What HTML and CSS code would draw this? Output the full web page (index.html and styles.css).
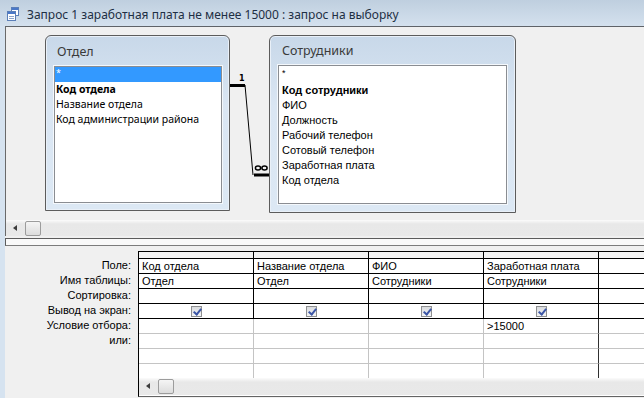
FILE: index.html
```html
<!DOCTYPE html>
<html lang="ru">

<head>
  <meta charset="UTF-8" />
  <title>Запрос 1 заработная плата не менее 15000</title>
  <link rel="stylesheet" href="styles.css">
</head>

<body>
  <div class="titlebar">
    <svg class="app-icon" width="12" height="14" viewBox="0 0 12 14">
      <rect x="4.5" y="0.5" width="7" height="8" fill="#fff" stroke="#5b7fb8" />
      <rect x="5" y="1" width="6" height="2" fill="#4a78c8" />
      <rect x="0.5" y="4.5" width="8" height="9" fill="#fff" stroke="#5b7fb8" />
      <rect x="1" y="5" width="7" height="2" fill="#4a78c8" />
      <path d="M2 9.5h5M2 11.5h5" stroke="#8aa4cc" />
    </svg>
    <span class="title">Запрос 1 заработная плата не менее 15000 : запрос на выборку</span>
  </div>

  <div class="frame">
    <div class="top-pane">
      <div class="diagram">
        <div class="tbl tbl-otdel">
          <div class="tbl-title">Отдел</div>
          <div class="tbl-list">
            <div class="fld selected">*</div>
            <div class="fld key">Код отдела</div>
            <div class="fld">Название отдела</div>
            <div class="fld">Код администрации района</div>
          </div>
        </div>

        <div class="tbl tbl-staff">
          <div class="tbl-title">Сотрудники</div>
          <div class="tbl-list">
            <div class="fld star">*</div>
            <div class="fld key">Код сотрудники</div>
            <div class="fld">ФИО</div>
            <div class="fld">Должность</div>
            <div class="fld">Рабочий телефон</div>
            <div class="fld">Сотовый телефон</div>
            <div class="fld">Заработная плата</div>
            <div class="fld">Код отдела</div>
          </div>
        </div>

        <!-- one-to-many link between the two tables -->
        <svg class="link" width="300" height="190">
          <path d="M224 58.5h15" stroke="#000" stroke-width="3" />
          <path d="M239 58L247 148" stroke="#000" stroke-width="1" />
          <path d="M248 148h15" stroke="#000" stroke-width="3" />
          <text x="233" y="54" class="link-one">1</text>
          <ellipse cx="252" cy="141" rx="2.6" ry="2" fill="none" stroke="#000" stroke-width="1.5" />
          <ellipse cx="258.5" cy="141" rx="2.6" ry="2" fill="none" stroke="#000" stroke-width="1.5" />
        </svg>
      </div>

      <div class="hscroll">
        <span class="arrow"></span>
        <span class="thumb"></span>
      </div>
    </div>

    <div class="splitter"></div>

    <div class="bottom-pane">
      <div class="labels">
        <div>Поле:</div>
        <div>Имя таблицы:</div>
        <div>Сортировка:</div>
        <div>Вывод на экран:</div>
        <div>Условие отбора:</div>
        <div>или:</div>
      </div>

      <div class="grid-wrap">
        <div class="qgrid">
          <div class="c sel"></div><div class="c sel"></div><div class="c sel"></div><div class="c sel"></div><div class="c sel last"></div>

          <div class="c">Код отдела</div><div class="c">Название отдела</div><div class="c">ФИО</div><div class="c">Заработная плата</div><div class="c last"></div>

          <div class="c">Отдел</div><div class="c">Отдел</div><div class="c">Сотрудники</div><div class="c">Сотрудники</div><div class="c last"></div>

          <div class="c"></div><div class="c"></div><div class="c"></div><div class="c"></div><div class="c last"></div>

          <div class="c chk-cell"><span class="chk"></span></div>
          <div class="c chk-cell"><span class="chk"></span></div>
          <div class="c chk-cell"><span class="chk"></span></div>
          <div class="c chk-cell"><span class="chk"></span></div>
          <div class="c last"></div>

          <div class="c lo"></div><div class="c lo"></div><div class="c lo"></div><div class="c lo edge">&gt;15000</div><div class="c lo last"></div>
          <div class="c lo"></div><div class="c lo"></div><div class="c lo"></div><div class="c lo edge"></div><div class="c lo last"></div>
          <div class="c lo"></div><div class="c lo"></div><div class="c lo"></div><div class="c lo edge"></div><div class="c lo last"></div>
          <div class="c lo end"></div><div class="c lo end"></div><div class="c lo end"></div><div class="c lo end edge"></div><div class="c lo end last"></div>
        </div>

        <div class="hscroll grid-scroll">
          <span class="arrow"></span>
          <span class="thumb"></span>
        </div>
      </div>
    </div>
  </div>
</body>

</html>
```

FILE: styles.css
```css
* {
  box-sizing: border-box;
}

body {
  margin: 0;
  width: 644px;
  height: 398px;
  overflow: hidden;
  background: #d6e3f0;
  font-family: 'Liberation Sans', Arial, sans-serif;
  font-size: 11px;
  color: #000;
}

/* title bar */

.titlebar {
  height: 26px;
  display: flex;
  align-items: center;
  gap: 8px;
  padding-left: 7px;
  background: linear-gradient(to bottom, #bfcfdf, #d4e1ee);
}

.app-icon {
  margin-top: 1px;
}

.title {
  font-family: 'Noto Sans', sans-serif;
  font-size: 12px;
  color: #1e2f44;
  margin-top: 2px;
}

.frame {
  margin-left: 5px;
  background: #f0f0f0;
  height: 372px;
}

/* upper pane: table diagram */

.top-pane {
  border-left: 1px solid #6a6a6a;
  border-top: 1px solid #5f6368;
}

.diagram {
  position: relative;
  height: 193px;
}

.tbl {
  position: absolute;
  top: 8px;
  display: flex;
  flex-direction: column;
  padding: 0 7px 7px 8px;
  border: 1px solid #5c5c5c;
  border-radius: 6px 6px 0 0;
  background: linear-gradient(to bottom, #c8d8e9, #dae6f3 40%, #dce8f4);
  box-shadow: inset 0 0 0 1px #e9f0f8;
}

.tbl-otdel {
  left: 39px;
  width: 185px;
  height: 176px;
}

.tbl-staff {
  left: 263px;
  width: 247px;
  height: 178px;
  padding-right: 8px;
  padding-bottom: 8px;
}

.tbl-title {
  height: 30px;
  line-height: 32px;
  padding-left: 3px;
  font-family: 'Noto Sans', sans-serif;
  font-size: 12.5px;
  color: #3a3a3a;
}

.tbl-staff .tbl-title {
  height: 29px;
  line-height: 30px;
  padding-left: 4px;
}

.tbl-list {
  flex: 1;
  background: #fff;
  border: 1px solid #8a8d92;
  box-shadow: 0 0 0 1px #f4f8fc;
}

.tbl-staff .tbl-list {
  padding-top: 2px;
}

.fld {
  height: 15px;
  line-height: 15px;
  padding-left: 1px;
  font-family: 'Noto Sans', sans-serif;
  font-size: 10.5px;
  white-space: nowrap;
}

.tbl-staff .fld {
  padding-left: 3px;
  font-family: 'Liberation Sans', Arial, sans-serif;
  font-size: 11px;
}

.fld.key {
  font-weight: bold;
}

.fld.selected {
  background: #3399ff;
  color: #fff;
  font-size: 9px;
  line-height: 11px;
}

.tbl-staff .fld.star {
  font-size: 9px;
  line-height: 11px;
}

.link {
  position: absolute;
  left: 0;
  top: 0;
  pointer-events: none;
}

.link-one {
  font-family: 'DejaVu Sans', sans-serif;
  font-size: 8px;
  font-weight: bold;
}

/* scroll bars */

.hscroll {
  position: relative;
  height: 16px;
  background: linear-gradient(to bottom, #f6f6f6, #e8e8e8 20%, #e9e9e9);
  border-top: 1px solid #f9f9f9;
}

.hscroll .arrow {
  position: absolute;
  left: 7px;
  top: 4px;
  border-right: 4px solid #3c3c3c;
  border-top: 3.5px solid transparent;
  border-bottom: 3.5px solid transparent;
}

.hscroll .thumb {
  position: absolute;
  left: 19px;
  top: 0;
  width: 16px;
  height: 15px;
  border: 1px solid #9c9c9c;
  border-radius: 2px;
  background: linear-gradient(to bottom, #f5f5f5, #dcdcdc);
}

.splitter {
  margin-top: 2px;
  height: 8px;
  border: 1px solid #5c5c5c;
  border-bottom-color: #7c7c7c;
  border-right: none;
  background: #f9f9f9;
}

/* lower pane: query grid */

.bottom-pane {
  display: flex;
  height: 151px;
}

.labels {
  width: 133px;
  padding-top: 12px;
  padding-right: 7px;
  text-align: right;
  color: #000;
}

.labels div {
  height: 15px;
  line-height: 15px;
  white-space: nowrap;
}

.grid-wrap {
  flex: 1;
  margin-top: 5px;
  border-left: 1px solid #000;
  border-top: 1px solid #000;
  border-bottom: 1px solid #646464;
  overflow: hidden;
  background: #fff;
}

.qgrid {
  display: grid;
  grid-template-columns: 115px 115px 115px 115px 60px;
  grid-template-rows: 7px repeat(4, 15px) repeat(3, 15px) 14px;
}

.c {
  border-right: 1px solid #000;
  border-bottom: 1px solid #000;
  padding-left: 3px;
  line-height: 14px;
  white-space: nowrap;
  overflow: hidden;
}

.c.sel {
  background: #f4f4f4;
}

.c.last {
  border-right: none;
}

.c.lo {
  border-right-color: #c4c4c4;
  border-bottom-color: #c4c4c4;
}

.c.lo.edge {
  border-right-color: #303030;
}

.c.end {
  border-bottom: none;
}

.chk-cell {
  display: flex;
  justify-content: center;
  align-items: center;
  padding-left: 0;
}

.chk {
  position: relative;
  width: 11px;
  height: 11px;
  border: 1px solid #8e8f91;
  background: linear-gradient(to bottom, #d9dbde, #f4f5f6);
}

.chk::after {
  content: '';
  position: absolute;
  left: 3px;
  top: 0;
  width: 3px;
  height: 6px;
  border-right: 2px solid #3c56a6;
  border-bottom: 2px solid #3c56a6;
  transform: rotate(40deg);
}

.grid-scroll {
  height: 17px;
}
```
